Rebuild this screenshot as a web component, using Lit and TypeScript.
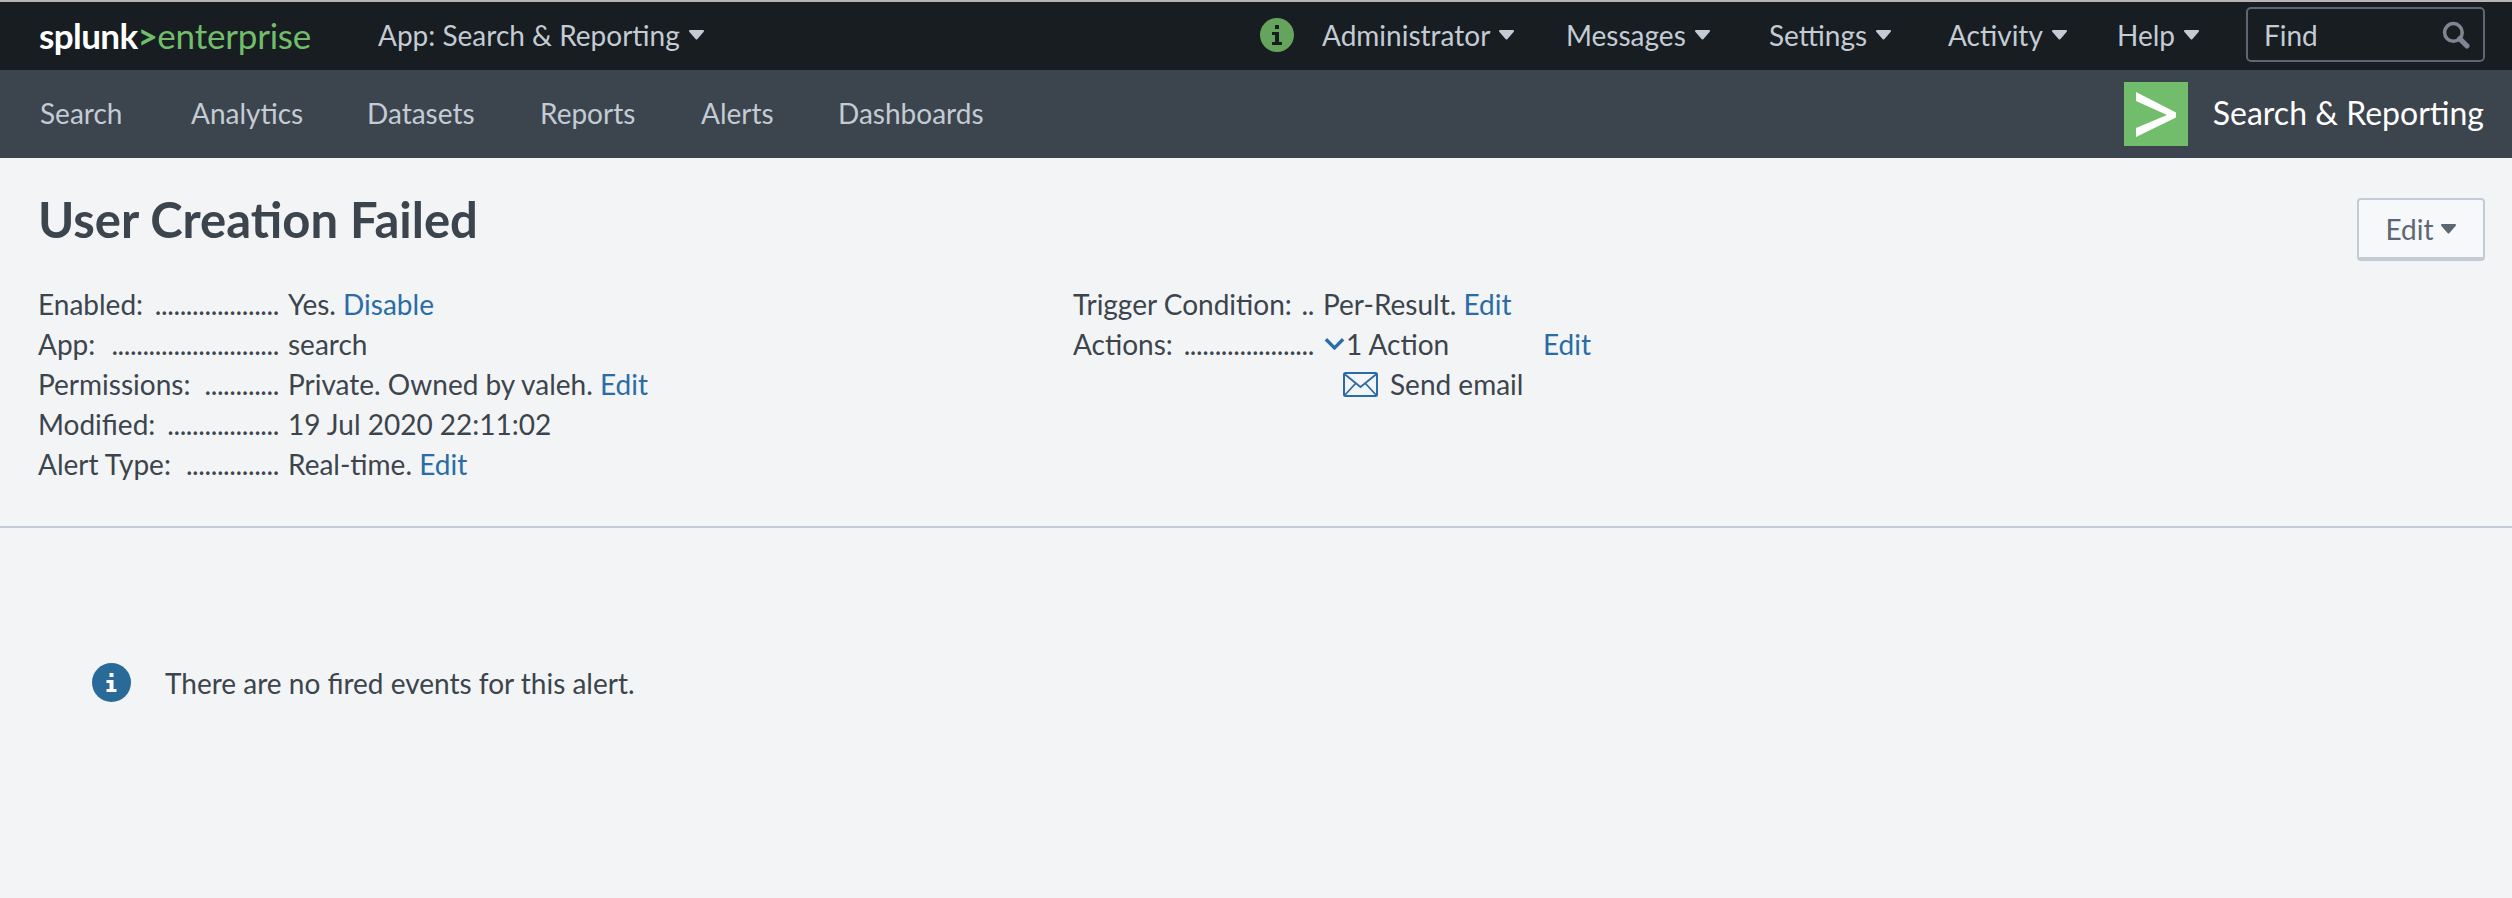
import { LitElement, html, css } from "lit";
import { customElement } from "lit/decorators.js";

const caret = html`<svg class="caret" viewBox="0 0 17 11"><path d="M2 2h13L8.500 9.500z" fill="currentColor" stroke="currentColor" stroke-width="2" stroke-linejoin="round"/></svg>`;

@customElement("app-root")
export class AppRoot extends LitElement {
  static styles = css`
    :host { display: block; width: 2512px; height: 898px; overflow: hidden; background: #f2f4f5; color: #3c444d;
      font-family: Lato, "Open Sans", sans-serif; font-size: 28px; }
    * { box-sizing: border-box; }
    a { color: #2b6ca6; text-decoration: none; }
    .top { height: 70px; background: #171d21; border-top: 2px solid #b5b5b5; display: flex; align-items: center; color: #c3cbd4; padding: 0 27px 3px 39px; }
    .logo { font-size: 35px; line-height: 40px; width: 270px; letter-spacing: -0.6px; color: #fff; font-weight: 700; white-space: nowrap; }
    .logo b { color: #72bd6b; font-weight: 700; }
    .logo span { color: #72bd6b; font-weight: 400; font-size: 35px; letter-spacing: -0.2px; }
    .menu { display: flex; align-items: center; gap: 8px; white-space: nowrap; }
    .caret { width: 17px; height: 11px; color: #c3cbd4; flex: none; }
    .app-menu { margin-left: 69px; }
    .right { margin-left: auto; display: grid; grid-template-columns: 62px 244px 203px 179px 169px 129px 239px; align-items: center; }
    .badge { width: 34px; height: 34px; border-radius: 50%; background: #65a45c; color: #171d21; display: flex; align-items: center; justify-content: center; }
    .find { height: 55px; border: 2px solid #5c6773; border-radius: 5px; display: flex; align-items: center; justify-content: space-between; padding: 0 13px 0 16px; }
    .find svg { width: 28px; height: 28px; }
    .sub { height: 88px; background: #3c444d; display: grid; grid-template-columns: 151px 176px 173px 161px 137px auto 1fr; align-items: center; padding: 0 28px 3px 40px; color: #c3cbd4; }
    .brand { justify-self: end; display: flex; align-items: center; gap: 25px; color: #fff; font-size: 32px; }
    .brand svg { width: 64px; height: 64px; display: block; position: relative; top: 1px; }
    .head { height: 370px; border-bottom: 2px solid #c3cbd4; padding: 40px 27px 0 38px; display: flex; flex-direction: column; }
    .title-row { display: flex; justify-content: space-between; align-items: flex-start; height: 86px; }
    h1 { margin: 0; font-size: 49px; line-height: 43px; font-weight: 700; }
    .edit { width: 128px; height: 63px; border: 2px solid #c3cbd4; border-bottom-width: 4px; border-radius: 4px; background: #f7f8fa; color: #5c6773; display: flex; align-items: center; justify-content: center; gap: 6px; }
    .edit .caret { color: #5c6773; }
    .cols { display: grid; grid-template-columns: 1035px 1fr; }
    .row { display: grid; grid-template-columns: 241px 1fr; column-gap: 9px; height: 40px; align-items: center; white-space: nowrap; }
    .lbl { display: flex; justify-content: space-between; }
    .lbl i { font-style: normal; letter-spacing: -0.4px; }
    .actions { display: flex; align-items: center; }
    .actions svg { width: 23px; height: 14px; }
    .actions .n { width: 197px; }
    .mail { display: flex; align-items: center; gap: 12px; padding-left: 20px; }
    .mail svg { width: 35px; height: 25px; }
    .empty { display: flex; align-items: center; gap: 34px; padding: 135px 0 0 92px; }
    .empty svg { width: 39px; height: 39px; }
  `;

  private row(label: string, n: number, value: unknown) {
    return html`<div class="row"><div class="lbl"><span>${label}:</span><i>${".".repeat(n)}</i></div><div>${value}</div></div>`;
  }

  render() {
    return html`
      <div class="top">
        <div class="logo">splunk<b>&gt;</b><span>enterprise</span></div>
        <div class="menu app-menu">App: Search &amp; Reporting ${caret}</div>
        <div class="right">
          <div class="badge"><svg width="16" height="22" viewBox="0 0 16 22"><path d="M6 1h4v4H6zM3 8h7v10h3v3H3v-3h3v-7H3z" fill="currentColor"/></svg></div>
          <div class="menu">Administrator ${caret}</div>
          <div class="menu">Messages ${caret}</div>
          <div class="menu">Settings ${caret}</div>
          <div class="menu">Activity ${caret}</div>
          <div class="menu">Help ${caret}</div>
          <div class="find">Find
            <svg viewBox="0 0 27 27"><circle cx="11" cy="11" r="8.500" fill="none" stroke="#7d8691" stroke-width="3.400"/><path d="M17 17l7 7" stroke="#7d8691" stroke-width="5" stroke-linecap="round"/></svg>
          </div>
        </div>
      </div>
      <div class="sub">
        <span>Search</span><span>Analytics</span><span>Datasets</span><span>Reports</span><span>Alerts</span><span>Dashboards</span>
        <div class="brand">
          <svg viewBox="0 0 64 64"><rect width="64" height="64" fill="#72bd6b"/><path d="M12 10l40 20.500v5L12 55V46l31-13L12 19z" fill="#fff"/></svg>
          Search &amp; Reporting
        </div>
      </div>
      <div class="head">
        <div class="title-row">
          <h1>User Creation Failed</h1>
          <div class="edit">Edit ${caret}</div>
        </div>
        <div class="cols">
          <div>
            ${this.row("Enabled", 20, html`Yes. <a>Disable</a>`)}
            ${this.row("App", 27, "search")}
            ${this.row("Permissions", 12, html`Private. Owned by valeh. <a>Edit</a>`)}
            ${this.row("Modified", 18, "19 Jul 2020 22:11:02")}
            ${this.row("Alert Type", 15, html`Real-time. <a>Edit</a>`)}
          </div>
          <div>
            ${this.row("Trigger Condition", 2, html`Per-Result. <a>Edit</a>`)}
            ${this.row("Actions", 21, html`<div class="actions">
              <svg viewBox="0 0 24 14"><path d="M3 2l9 9 9-9" fill="none" stroke="#2b6ca6" stroke-width="3.500"/></svg>
              <span class="n">1 Action</span><a>Edit</a></div>`)}
            <div class="row"><div></div><div class="mail">
              <svg viewBox="0 0 35 25"><rect x="1" y="1" width="33" height="23" rx="1.500" fill="none" stroke="#2b6ca6" stroke-width="2"/><path d="M1.500 2l16 13 16-13M1.500 23.500l11-12M33.500 23.500l-11-12" fill="none" stroke="#2b6ca6" stroke-width="1.800"/></svg>
              Send email</div></div>
          </div>
        </div>
      </div>
      <div class="empty">
        <svg viewBox="0 0 39 39"><circle cx="19.500" cy="19.500" r="19.500" fill="#2a6a99"/><path d="M17.500 10h4v4h-4zM14.500 17h7v9h3v3h-10v-3h3v-6h-3z" fill="#fff"/></svg>
        <span>There are no fired events for this alert.</span>
      </div>
    `;
  }
}
